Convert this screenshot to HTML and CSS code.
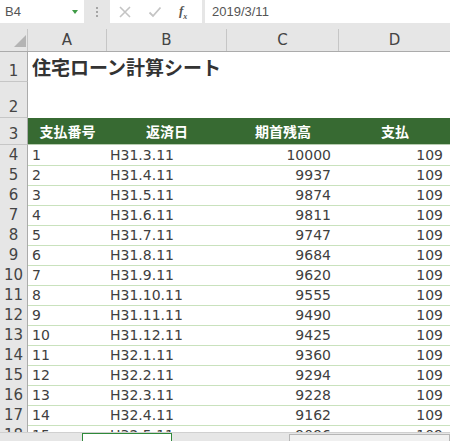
FILE: index.html
```html
<!DOCTYPE html>
<html lang="ja">
<head>
<meta charset="utf-8">
<link rel="stylesheet" href="styles.css">
</head>
<body>
<div class="app">
  <div class="formula-bar">
    <div class="namebox"><span>B4</span><span class="dd"></span></div>
    <div class="grip"><span></span><span></span><span></span></div>
    <div class="fbtns">
      <svg class="ico" width="14" height="14" viewBox="0 0 14 14"><path d="M2 2 L12 12 M12 2 L2 12" stroke="#c4c4c4" stroke-width="1.6" fill="none"/></svg>
      <svg class="ico" width="14" height="14" viewBox="0 0 14 14"><path d="M1.5 7.5 L5 11 L12.5 2.5" stroke="#c4c4c4" stroke-width="1.8" fill="none"/></svg>
      <span class="fx">f<sub>x</sub></span>
    </div>
    <div class="finput">2019/3/11</div>
  </div>
  <div class="sheet">
    <div class="row colhead">
      <div class="corner"><span class="tri"></span></div>
      <div class="ch">A</div><div class="ch">B</div><div class="ch">C</div><div class="ch">D</div>
    </div>
    <div class="row r1">
      <div class="rh">1</div>
      <div class="title">住宅ローン計算シート</div>
    </div>
    <div class="row r2"><div class="rh">2</div><div></div><div></div><div></div><div></div></div>
    <div class="row r3">
      <div class="rh">3</div>
      <div class="th">支払番号</div><div class="th">返済日</div><div class="th">期首残高</div><div class="th">支払</div>
    </div>
    <div class="row d"><div class="rh">4</div><div class="l">1</div><div class="l">H31.3.11</div><div class="r">10000</div><div class="r">109</div></div>
    <div class="row d"><div class="rh">5</div><div class="l">2</div><div class="l">H31.4.11</div><div class="r">9937</div><div class="r">109</div></div>
    <div class="row d"><div class="rh">6</div><div class="l">3</div><div class="l">H31.5.11</div><div class="r">9874</div><div class="r">109</div></div>
    <div class="row d"><div class="rh">7</div><div class="l">4</div><div class="l">H31.6.11</div><div class="r">9811</div><div class="r">109</div></div>
    <div class="row d"><div class="rh">8</div><div class="l">5</div><div class="l">H31.7.11</div><div class="r">9747</div><div class="r">109</div></div>
    <div class="row d"><div class="rh">9</div><div class="l">6</div><div class="l">H31.8.11</div><div class="r">9684</div><div class="r">109</div></div>
    <div class="row d"><div class="rh">10</div><div class="l">7</div><div class="l">H31.9.11</div><div class="r">9620</div><div class="r">109</div></div>
    <div class="row d"><div class="rh">11</div><div class="l">8</div><div class="l">H31.10.11</div><div class="r">9555</div><div class="r">109</div></div>
    <div class="row d"><div class="rh">12</div><div class="l">9</div><div class="l">H31.11.11</div><div class="r">9490</div><div class="r">109</div></div>
    <div class="row d"><div class="rh">13</div><div class="l">10</div><div class="l">H31.12.11</div><div class="r">9425</div><div class="r">109</div></div>
    <div class="row d"><div class="rh">14</div><div class="l">11</div><div class="l">H32.1.11</div><div class="r">9360</div><div class="r">109</div></div>
    <div class="row d"><div class="rh">15</div><div class="l">12</div><div class="l">H32.2.11</div><div class="r">9294</div><div class="r">109</div></div>
    <div class="row d"><div class="rh">16</div><div class="l">13</div><div class="l">H32.3.11</div><div class="r">9228</div><div class="r">109</div></div>
    <div class="row d"><div class="rh">17</div><div class="l">14</div><div class="l">H32.4.11</div><div class="r">9162</div><div class="r">109</div></div>
    <div class="row d"><div class="rh">18</div><div class="l">15</div><div class="l">H32.5.11</div><div class="r">9096</div><div class="r">109</div></div>
  </div>
  <div class="tabbar">
    <div class="tab"></div>
    <div class="hscroll"></div>
  </div>
</div>
</body>
</html>
```
FILE: styles.css
```css
html, body {
  margin: 0;
  padding: 0;
  background: #ffffff;
}
.app {
  position: relative;
  width: 450px;
  height: 441px;
  overflow: hidden;
  font-family: "DejaVu Sans", "Noto Sans CJK JP", sans-serif;
  color: #404040;
  background: #e6e6e6;
}
.formula-bar {
  display: flex;
  height: 23px;
  background: #e6e6e6;
  padding-bottom: 6px;
}
.namebox {
  width: 84px;
  background: #fff;
  display: flex;
  align-items: center;
  justify-content: space-between;
  padding: 0 6px 0 5px;
  box-sizing: border-box;
  font-family: "Liberation Sans", sans-serif;
  font-size: 13px;
  color: #555;
}
.dd {
  width: 0;
  height: 0;
  border-left: 3px solid transparent;
  border-right: 3px solid transparent;
  border-top: 4px solid #3f9b46;
}
.grip {
  width: 26px;
  display: flex;
  flex-direction: column;
  align-items: center;
  justify-content: center;
  gap: 2px;
}
.grip span {
  width: 2px;
  height: 2px;
  background: #a5a5a5;
}
.fbtns {
  width: 92px;
  background: #fff;
  display: flex;
  align-items: center;
  padding-left: 8px;
  gap: 16px;
  box-sizing: border-box;
}
.fx {
  font-family: "Liberation Serif", serif;
  font-style: italic;
  font-weight: bold;
  font-size: 13px;
  color: #555;
  margin-left: 1px;
}
.fx sub {
  font-size: 8px;
}
.finput {
  flex: 1;
  margin-left: 3px;
  background: #fff;
  font-family: "Liberation Sans", sans-serif;
  font-size: 13px;
  color: #555;
  padding-left: 7px;
  line-height: 23px;
}
.sheet {
  background: #fff;
}
.row {
  display: grid;
  grid-template-columns: 28px 79px 120px 112px 112px;
}
.colhead {
  height: 23px;
  background: #e6e6e6;
  border-bottom: 1px solid #ababab;
  box-sizing: border-box;
}
.corner {
  position: relative;
  border-right: 1px solid #c6c6c6;
}
.tri {
  position: absolute;
  right: 1px;
  bottom: 4px;
  width: 0;
  height: 0;
  border-left: 12px solid transparent;
  border-bottom: 12px solid #b4b4b4;
}
.ch {
  text-align: center;
  font-size: 15px;
  line-height: 22px;
  color: #444;
  border-right: 1px solid #c6c6c6;
}
.rh {
  background: #e6e6e6;
  border-right: 1px solid #ababab;
  border-bottom: 1px solid #c6c6c6;
  font-size: 15px;
  color: #444;
  text-align: center;
  display: flex;
  align-items: flex-end;
  justify-content: center;
  padding-bottom: 1px;
  box-sizing: border-box;
}
.r1 { height: 30px; }
.r2 { height: 36px; }
.r3 { height: 27px; }
.title {
  grid-column: 2 / 6;
  font-family: "Noto Sans CJK JP", sans-serif;
  font-weight: bold;
  font-size: 19px;
  color: #333;
  padding-left: 4px;
  line-height: 30px;
  white-space: nowrap;
}
.r3 .th {
  background: #376a32;
  color: #fff;
  font-family: "Noto Sans CJK JP", sans-serif;
  font-weight: bold;
  font-size: 14px;
  text-align: center;
  line-height: 26px;
  border-bottom: 1px solid #b7ccb0;
}
.d {
  height: 20px;
}
.d > div:not(.rh) {
  border-bottom: 1px solid #c9e2bd;
  font-size: 14px;
  line-height: 20px;
  color: #404040;
  white-space: nowrap;
}
.d .l { padding-left: 4px; }
.d > .l:nth-child(3) { padding-left: 3px; }
.d .r { text-align: right; padding-right: 8px; }
.tabbar {
  position: absolute;
  left: 0;
  bottom: 0;
  width: 450px;
  height: 8px;
  background: #e6e6e6;
  border-top: 1px solid #d0d0d0;
}
.tab {
  position: absolute;
  left: 82px;
  top: 0;
  width: 90px;
  height: 8px;
  background: #fff;
  border: 1px solid #2f8a3a;
  border-bottom: none;
  box-sizing: border-box;
}
.hscroll {
  position: absolute;
  left: 289px;
  top: 1px;
  width: 161px;
  height: 8px;
  background: #f0f0f0;
  border: 1px solid #b6b6b6;
  box-sizing: border-box;
}
```
